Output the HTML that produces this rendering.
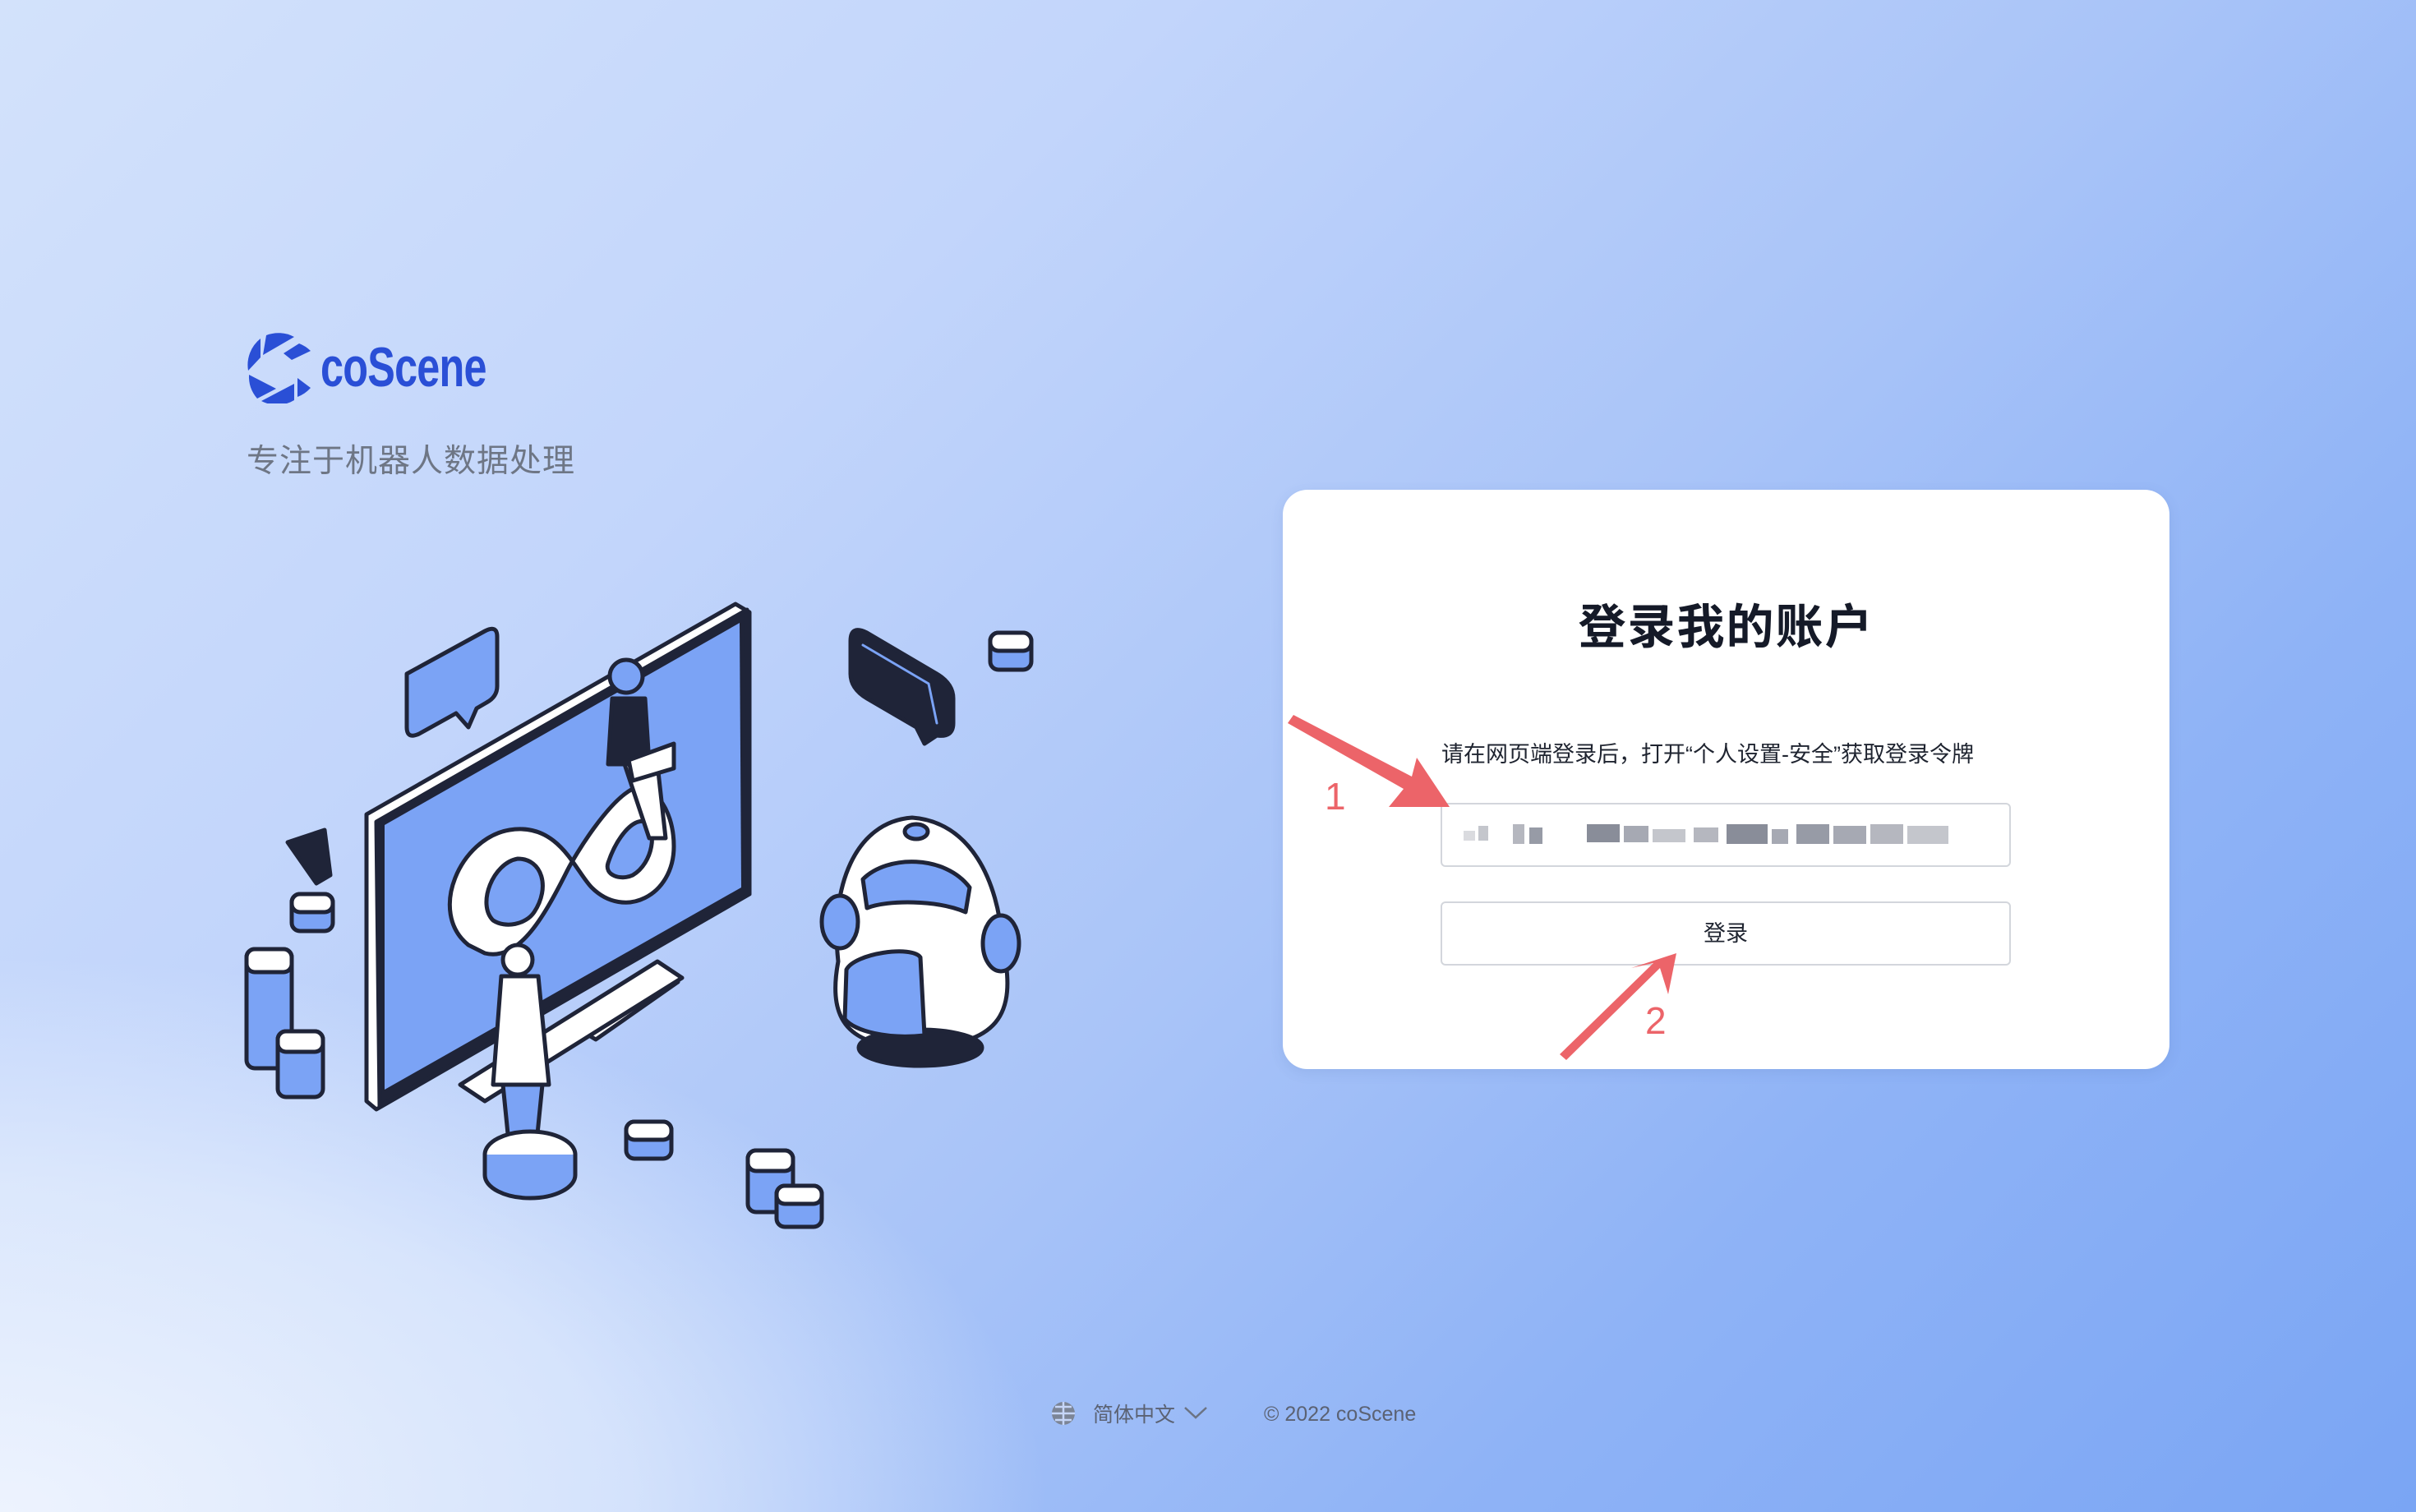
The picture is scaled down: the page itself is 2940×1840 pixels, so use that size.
<!DOCTYPE html>
<html><head><meta charset="utf-8"><style>
html,body{margin:0;padding:0}
body{width:2940px;height:1840px;position:relative;overflow:hidden;font-family:"Liberation Sans","Noto Sans CJK SC",sans-serif;
background:linear-gradient(135deg,#d3e2fb 0%,#c2d5fb 30%,#a9c4f8 55%,#8fb3f6 75%,#7aa5f4 100%);}
.bl{position:absolute;left:0;top:0;width:2940px;height:1840px;background:radial-gradient(ellipse 1700px 900px at 0px 1840px,rgba(240,245,254,.95) 0%,rgba(230,239,253,.7) 45%,rgba(220,232,252,0) 75%)}
.logo{position:absolute;left:300px;top:405px}
.brand{position:absolute;left:390px;top:408px;font-size:68px;font-weight:bold;color:#2a4fd6;font-family:"Liberation Sans Narrow","Liberation Sans",sans-serif;font-stretch:condensed;letter-spacing:-1px;transform:scaleX(.74);transform-origin:left}
.sub{position:absolute;left:300px;top:530px;font-size:39px;color:#6e7685;letter-spacing:1px}
.card{position:absolute;left:1561px;top:596px;width:1079px;height:705px;background:#fff;border-radius:30px;box-shadow:0 4px 16px rgba(60,90,160,.12)}
.title{position:absolute;left:0;width:100%;top:716px;text-align:center;font-size:58px;font-weight:bold;color:#151a28;letter-spacing:2px}
.hint{position:absolute;left:1754px;top:896px;font-size:27px;color:#1f2430}
.inp{position:absolute;left:1753px;top:977px;width:690px;height:74px;border:2px solid #d3d6dc;border-radius:6px;background:#fff}
.btn{position:absolute;left:1753px;top:1097px;width:690px;height:74px;border:2px solid #d3d6dc;border-radius:6px;background:#fff;text-align:center;line-height:74px;font-size:27px;color:#1f2430}
.foot{position:absolute;top:1702px;font-size:25px;color:#5b6273}
</style></head><body>
<div class="bl"></div>

<svg class="logo" width="80" height="86" viewBox="0 0 80 86">
<path d="M24 3 A41 41 0 0 1 58 5 L20 27 Z" fill="#2a4fd6"/>
<path d="M17 7 L17 30 L2 46 A41 41 0 0 1 17 7Z" fill="#2a4fd6"/>
<path d="M3 51 L36 68 L13 80 A41 41 0 0 1 3 51Z" fill="#2a4fd6"/>
<path d="M18 83 L58 62 L58 82 A41 41 0 0 1 18 83Z" fill="#2a4fd6"/>
<path d="M62 55 L78 67 A41 41 0 0 1 62 78Z" fill="#2a4fd6"/>
<path d="M45 25 L64 13 A41 41 0 0 1 78 22 L55 33Z" fill="#2a4fd6"/>
</svg>
<div class="brand">coScene</div>
<div class="sub">专注于机器人数据处理</div>

<svg style="position:absolute;left:0;top:0" width="1300" height="1560" viewBox="0 0 1300 1560">
<g stroke="#1f2438" stroke-width="5" stroke-linejoin="round" stroke-linecap="round">
<polygon points="700,1250 800,1180 825,1195 725,1265" fill="#fff"/>
<polygon points="560,1320 800,1170 830,1190 590,1340" fill="#fff"/>
<polygon points="446,991 895,735 912,745 912,1088 458,1350 446,1340" fill="#fff"/>
<polygon points="458,1000 909,742 912,1088 462,1346" fill="#1f2438"/>
<polygon points="468,1004 900,758 902,1080 468,1326" fill="#7ba3f5" stroke="none"/>
<path d="M570 1150 C520 1110 560 1020 620 1010 C680 1000 700 1060 720 1080 C760 1120 820 1090 820 1030 C820 980 790 950 770 960 C740 975 700 1040 690 1060 C660 1120 630 1170 590 1160 Z" fill="#fff"/>
<path d="M600 1120 C580 1100 600 1050 630 1045 C660 1045 670 1080 650 1110 C640 1125 615 1130 600 1120Z" fill="#7ba3f5"/>
<path d="M740 1050 C750 1020 770 995 785 1000 C800 1010 795 1050 770 1065 C755 1072 735 1065 740 1050Z" fill="#7ba3f5"/>
<circle cx="762" cy="823" r="20" fill="#7ba3f5"/>
<path d="M745 850 L785 850 L790 930 L740 930Z" fill="#1f2438"/>
<path d="M760 930 L800 930 L810 1020 L790 1020Z" fill="#fff"/>
<polygon points="765,925 820,905 820,935 770,950" fill="#fff"/>
<circle cx="630" cy="1168" r="18" fill="#fff"/>
<path d="M610 1188 L655 1188 L668 1320 L600 1320Z" fill="#fff"/>
<path d="M612 1320 L660 1320 L652 1400 L620 1400Z" fill="#7ba3f5"/>
<ellipse cx="645" cy="1405" rx="55" ry="28" fill="#fff"/>
<path d="M590 1405 L590 1430 A55 28 0 0 0 700 1430 L700 1405" fill="#7ba3f5"/>
<path d="M495 820 L590 768 Q605 760 605 775 L605 835 Q605 848 592 855 L580 862 L570 885 L555 868 L510 893 Q495 900 495 885Z" fill="#7ba3f5"/>
<path d="M1035 780 Q1035 760 1055 770 L1140 820 Q1160 832 1160 850 L1160 880 Q1160 898 1140 895 L1125 905 L1115 885 L1055 850 Q1035 838 1035 820Z" fill="#1f2438"/>
<path d="M1050 785 L1130 832 L1140 880" fill="none" stroke="#7ba3f5" stroke-width="3"/>
<path d="M1020 1170 C1010 1080 1040 1000 1110 995 C1180 1000 1215 1070 1220 1150 C1240 1240 1210 1270 1120 1275 C1040 1275 1005 1250 1020 1170Z" fill="#fff"/>
<ellipse cx="1120" cy="1275" rx="75" ry="22" fill="#1f2438"/>
<path d="M1050 1070 C1080 1040 1150 1040 1180 1080 L1175 1110 C1140 1095 1080 1095 1055 1105Z" fill="#7ba3f5"/>
<path d="M1030 1180 C1040 1160 1110 1150 1120 1165 L1125 1260 C1080 1265 1040 1255 1028 1240Z" fill="#7ba3f5"/>
<ellipse cx="1022" cy="1122" rx="22" ry="32" fill="#7ba3f5"/>
<ellipse cx="1218" cy="1148" rx="22" ry="34" fill="#7ba3f5"/>
<ellipse cx="1115" cy="1012" rx="14" ry="9" fill="#7ba3f5"/>
<g fill="#7ba3f5">
<rect x="1205" y="770" width="50" height="45" rx="10"/>
<rect x="355" y="1088" width="50" height="45" rx="10"/>
<rect x="762" y="1365" width="55" height="45" rx="10"/>
<rect x="300" y="1155" width="55" height="145" rx="10"/>
<rect x="338" y="1255" width="55" height="80" rx="10"/>
<rect x="910" y="1400" width="55" height="75" rx="10"/>
<rect x="945" y="1443" width="55" height="50" rx="10"/>
</g>
<g fill="#fff">
<rect x="1205" y="770" width="50" height="22" rx="10"/>
<rect x="355" y="1088" width="50" height="22" rx="10"/>
<rect x="762" y="1365" width="55" height="22" rx="10"/>
<rect x="300" y="1155" width="55" height="28" rx="10"/>
<rect x="338" y="1255" width="55" height="25" rx="10"/>
<rect x="910" y="1400" width="55" height="25" rx="10"/>
<rect x="945" y="1443" width="55" height="22" rx="10"/>
</g>
<polygon points="350,1025 395,1010 402,1065 385,1075" fill="#1f2438"/>
</g>
</svg>

<div class="card"></div>
<div class="title" style="left:1561px;width:1079px">登录我的账户</div>
<div class="hint">请在网页端登录后，打开“个人设置-安全”获取登录令牌</div>
<div class="inp"></div>
<svg style="position:absolute;left:1781px;top:1003px" width="630" height="28">
<g fill="#6b7080">
<rect x="0" y="8" width="14" height="12" opacity=".25"/><rect x="18" y="2" width="12" height="18" opacity=".4"/>
<rect x="60" y="0" width="14" height="24" opacity=".5"/><rect x="80" y="4" width="16" height="20" opacity=".7"/>
<rect x="150" y="0" width="40" height="22" opacity=".8"/><rect x="195" y="2" width="30" height="20" opacity=".6"/>
<rect x="230" y="6" width="40" height="16" opacity=".4"/><rect x="280" y="4" width="30" height="18" opacity=".5"/>
<rect x="320" y="0" width="50" height="24" opacity=".8"/><rect x="375" y="6" width="20" height="18" opacity=".6"/>
<rect x="405" y="0" width="40" height="24" opacity=".7"/><rect x="450" y="2" width="40" height="22" opacity=".6"/>
<rect x="495" y="0" width="40" height="24" opacity=".5"/><rect x="540" y="2" width="50" height="22" opacity=".4"/>
</g></svg>
<div class="btn">登录</div>

<svg style="position:absolute;left:0;top:0" width="2940" height="1840">
<g fill="#ec6469">
<polygon points="1567,880 1574,870 1718,945 1724,922 1764,982 1690,982 1708,960"/>
<polygon points="1898,1283 1906,1290 2020,1178 2030,1210 2040,1160 1985,1178 2012,1172"/>
</g>
<text x="1612" y="985" font-size="46" fill="#ec6469" font-family="Liberation Sans,sans-serif">1</text>
<text x="2002" y="1258" font-size="46" fill="#ec6469" font-family="Liberation Sans,sans-serif">2</text>
</svg>

<svg style="position:absolute;left:1277px;top:1703px" width="34" height="34" viewBox="0 0 34 34">
<circle cx="17" cy="17" r="14" fill="#7c8596"/>
<path d="M3 17h28M17 3v28M7 9h20M7 25h20" stroke="#c6d6f8" stroke-width="2.5"/>
</svg>
<div class="foot" style="left:1330px">简体中文</div>
<svg style="position:absolute;left:1440px;top:1710px" width="30" height="18"><path d="M2 3 L15 15 L28 3" fill="none" stroke="#6b7383" stroke-width="2.5"/></svg>
<div class="foot" style="left:1538px;top:1707px">© 2022 coScene</div>
</body></html>
